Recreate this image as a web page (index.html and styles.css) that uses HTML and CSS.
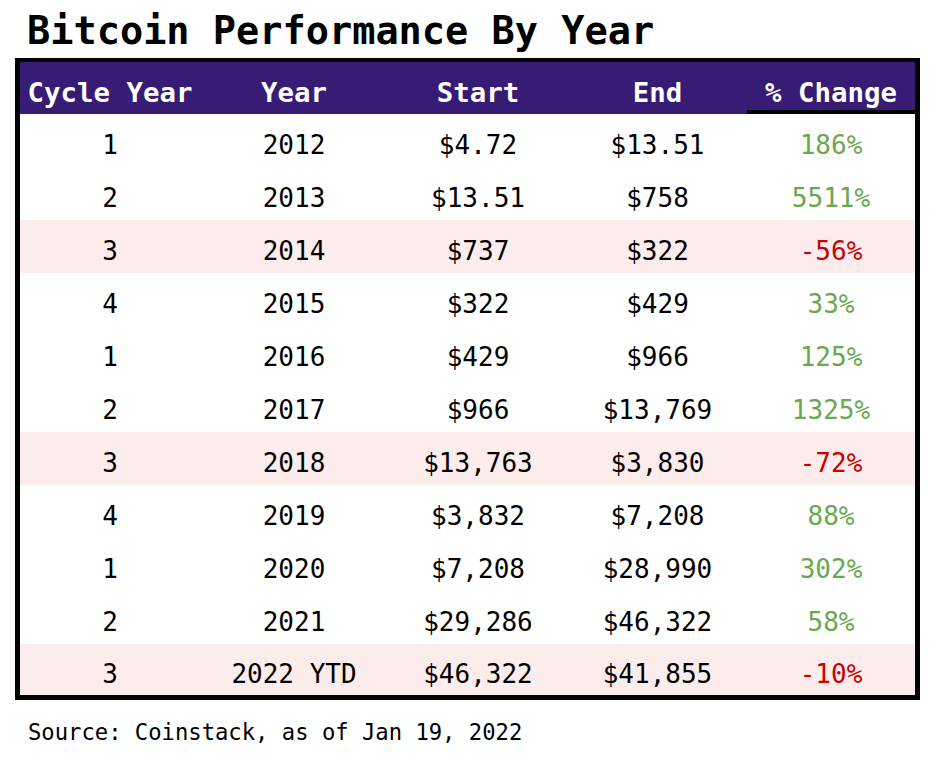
FILE: index.html
```html
<!DOCTYPE html>
<html lang="en">
<head>
<meta charset="utf-8">
<title>Bitcoin Performance By Year</title>
<link rel="stylesheet" href="styles.css">
</head>
<body>
<div class="page">
  <h1 class="title">Bitcoin Performance By Year</h1>
  <table class="perf">
    <colgroup>
      <col class="c1"><col class="c2"><col class="c3"><col class="c4"><col class="c5">
    </colgroup>
    <thead>
      <tr>
        <th>Cycle Year</th><th>Year</th><th>Start</th><th>End</th><th class="last">% Change</th>
      </tr>
    </thead>
    <tbody>
      <tr><td>1</td><td>2012</td><td>$4.72</td><td>$13.51</td><td class="up">186%</td></tr>
      <tr><td>2</td><td>2013</td><td>$13.51</td><td>$758</td><td class="up">5511%</td></tr>
      <tr class="neg"><td>3</td><td>2014</td><td>$737</td><td>$322</td><td class="down">-56%</td></tr>
      <tr><td>4</td><td>2015</td><td>$322</td><td>$429</td><td class="up">33%</td></tr>
      <tr><td>1</td><td>2016</td><td>$429</td><td>$966</td><td class="up">125%</td></tr>
      <tr><td>2</td><td>2017</td><td>$966</td><td>$13,769</td><td class="up">1325%</td></tr>
      <tr class="neg"><td>3</td><td>2018</td><td>$13,763</td><td>$3,830</td><td class="down">-72%</td></tr>
      <tr><td>4</td><td>2019</td><td>$3,832</td><td>$7,208</td><td class="up">88%</td></tr>
      <tr><td>1</td><td>2020</td><td>$7,208</td><td>$28,990</td><td class="up">302%</td></tr>
      <tr><td>2</td><td>2021</td><td>$29,286</td><td>$46,322</td><td class="up">58%</td></tr>
      <tr class="neg lastrow"><td>3</td><td>2022 YTD</td><td>$46,322</td><td>$41,855</td><td class="down">-10%</td></tr>
    </tbody>
  </table>
  <p class="source">Source: Coinstack, as of Jan 19, 2022</p>
</div>
</body>
</html>
```

FILE: styles.css
```css
html, body {
  margin: 0;
  padding: 0;
  background: #ffffff;
}

body {
  font-family: "DejaVu Sans Mono", "Liberation Mono", monospace;
  color: #000000;
}

.page {
  padding: 0 0 0 15px;
}

.title {
  margin: 0;
  padding: 8px 0 0 12px;
  height: 58px;
  box-sizing: border-box;
  font-size: 38.6px;
  font-weight: bold;
  line-height: 46px;
  letter-spacing: 0;
}

.perf {
  width: 905px;
  border: 5px solid #000000;
  border-top-width: 4px;
  border-collapse: separate;
  border-spacing: 0;
  table-layout: fixed;
}

.c1 { width: 180px; }
.c2 { width: 188px; }
.c3 { width: 180px; }
.c4 { width: 179px; }
.c5 { width: 168px; }

.perf th,
.perf td {
  padding: 9px 0 0 0;
  text-align: center;
  white-space: nowrap;
}

.perf th {
  height: 43px;
  background: #361c75;
  color: #ffffff;
  font-size: 27.4px;
  font-weight: bold;
}

.perf th.last {
  box-shadow: inset 0 -4px 0 #000000;
}

.perf td {
  height: 44px;
  font-size: 26px;
  font-weight: normal;
}

.perf tr.lastrow td {
  height: 43px;
  padding-top: 8px;
}

.perf tr.neg td {
  background: #fdecec;
}

.perf td.up {
  color: #6aa84f;
}

.perf td.down {
  color: #cc0000;
}

.source {
  margin: 0;
  padding: 19px 0 0 13px;
  font-size: 22.2px;
  line-height: 26px;
}
```
